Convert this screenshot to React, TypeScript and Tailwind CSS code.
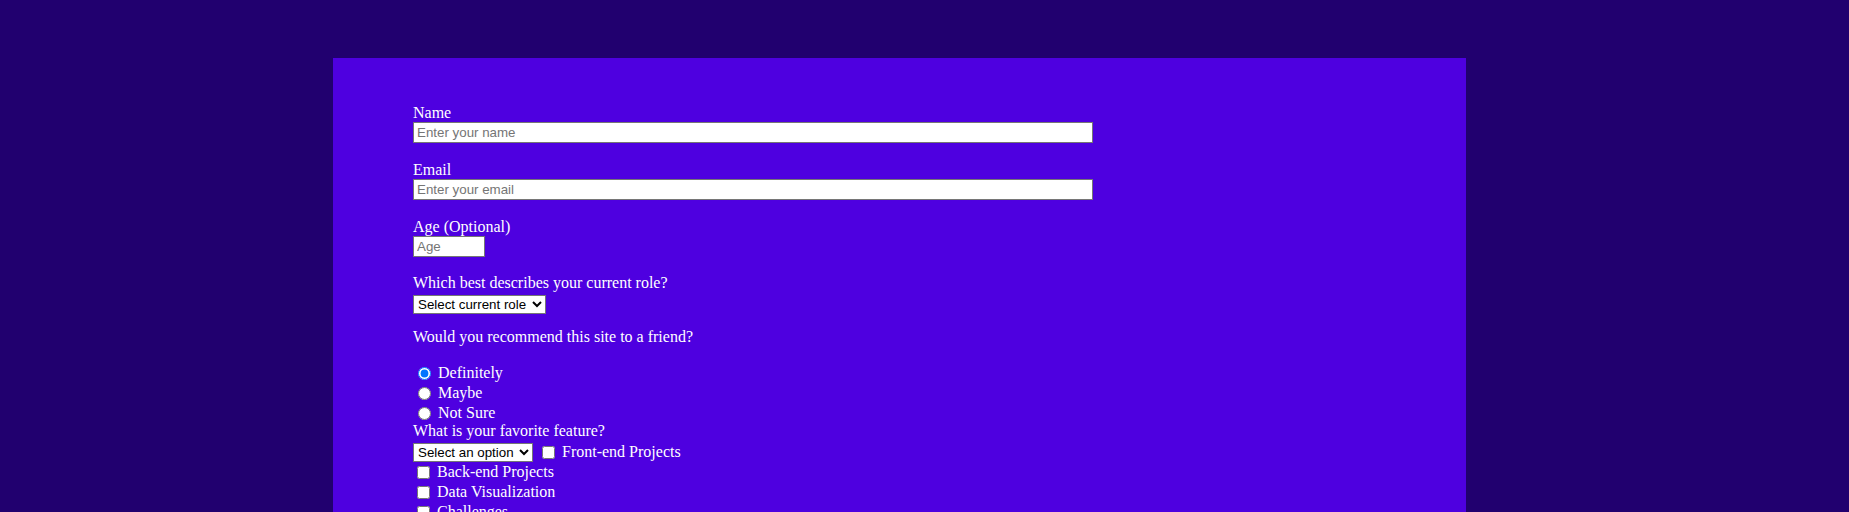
import React from "react";

const serif = "font-['Liberation_Serif','Times_New_Roman',serif]";
const sans = "font-['Liberation_Sans',Arial,sans-serif]";

function Label({ children, className = "" }: { children: React.ReactNode; className?: string }) {
  return <div className={`text-[16px] leading-[18px] text-white ${className}`}>{children}</div>;
}

export default function App() {
  const textInput =
    `block h-[21px] border border-[#767676] bg-white px-[3px] text-[13.333px] text-black placeholder:text-[#757575] ${sans}`;
  const selectCls =
    `h-[19px] border border-[#767676] bg-white pl-0 text-[13.333px] text-black ${sans}`;
  return (
    <div className={`h-[512px] w-full overflow-hidden bg-[#21006f] pt-[58px] ${serif}`}>
      <div className="ml-[333px] h-[600px] w-[1133px] bg-[#4e00e0] pl-[80px] pt-[46px]">
        <form>
          <Label>Name</Label>
          <input type="text" placeholder="Enter your name" className={`${textInput} w-[680px]`} />

          <Label className="mt-[18px]">Email</Label>
          <input type="email" placeholder="Enter your email" className={`${textInput} w-[680px]`} />

          <Label className="mt-[18px]">Age (Optional)</Label>
          <input type="number" placeholder="Age" className={`${textInput} w-[72px]`} />

          <Label className="mt-[17px]">Which best describes your current role?</Label>
          <div className="h-[19px]">
            <select className={`${selectCls} w-[133px]`} defaultValue="">
              <option value="" disabled>
                Select current role
              </option>
              <option>Student</option>
            </select>
          </div>

          <Label className="mt-[17px]">Would you recommend this site to a friend?</Label>
          <div className="mt-[17px]">
            {["Definitely", "Maybe", "Not Sure"].map((r, i) => (
              <div key={r} className="flex h-[20px] items-center text-[16px] text-white">
                <input
                  type="radio"
                  name="rec"
                  defaultChecked={i === 0}
                  className="ml-[5px] h-[13px] w-[13px]"
                />
                <span className="ml-[7px] leading-[18px]">{r}</span>
              </div>
            ))}
          </div>

          <Label className="-mt-[1px]">What is your favorite feature?</Label>
          <div className="mt-[2px] flex h-[20px] items-center text-[16px] text-white">
            <select className={`${selectCls} h-[18px] w-[120px]`} defaultValue="">
              <option value="" disabled>
                Select an option
              </option>
              <option>Challenges</option>
            </select>
            <input type="checkbox" className="ml-[9px] h-[13px] w-[13px]" />
            <span className="ml-[7px] leading-[18px]">Front-end Projects</span>
          </div>
          {["Back-end Projects", "Data Visualization", "Challenges"].map((c) => (
            <div key={c} className="flex h-[20px] items-center text-[16px] text-white">
              <input type="checkbox" className="ml-[4px] h-[13px] w-[13px]" />
              <span className="ml-[7px] leading-[18px]">{c}</span>
            </div>
          ))}
        </form>
      </div>
    </div>
  );
}
